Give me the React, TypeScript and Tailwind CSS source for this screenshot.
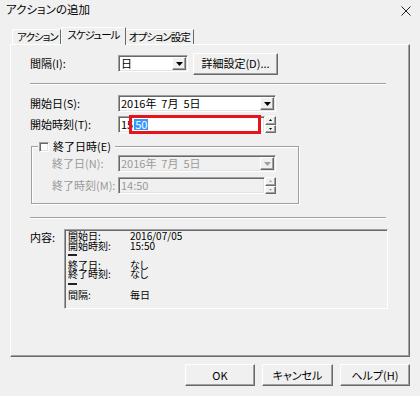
import React from "react";

const raised =
  "border border-t-white border-l-white border-r-[#696969] border-b-[#696969] shadow-[inset_-1px_-1px_0_#a0a0a0] bg-[#f0f0f0]";
const sunken =
  "border border-t-[#a0a0a0] border-l-[#a0a0a0] border-r-white border-b-white shadow-[inset_1px_1px_0_#696969,inset_-1px_-1px_0_#e3e3e3]";

function DownArrow({ disabled }: { disabled?: boolean }) {
  return (
    <svg width="7" height="4" viewBox="0 0 7 4">
      <path d="M0 0H7L3.5 4Z" fill={disabled ? "#a0a0a0" : "#000"} />
    </svg>
  );
}

function Combo({ w, value, disabled }: { w: string; value: string; disabled?: boolean }) {
  return (
    <div className={`flex h-[17px] ${w} ${sunken} p-[1px] ${disabled ? "bg-[#f0f0f0] text-[#9a9a9a]" : "bg-white text-black"}`}>
      <div className="flex-1 flex items-center pl-[1px] leading-none whitespace-pre">{value}</div>
      <div className={`w-[14px] h-full ${raised} flex items-center justify-center`}>
        <DownArrow disabled={disabled} />
      </div>
    </div>
  );
}

function Spin({ disabled }: { disabled?: boolean }) {
  const c = disabled ? "#a0a0a0" : "#000";
  return (
    <div className="flex flex-col w-[11px] h-[17px]">
      <div className={`flex-1 ${raised} flex items-center justify-center`}>
        <svg width="3" height="2" viewBox="0 0 3 2"><path d="M0 2H3L1.5 0Z" fill={c} /></svg>
      </div>
      <div className={`flex-1 ${raised} flex items-center justify-center`}>
        <svg width="3" height="2" viewBox="0 0 3 2"><path d="M0 0H3L1.5 2Z" fill={c} /></svg>
      </div>
    </div>
  );
}

function Separator() {
  return <div className="w-[356px] h-[2px] border-t border-t-[#a0a0a0] border-b border-b-white" />;
}

function Btn({ w, children }: { w: string; children: React.ReactNode }) {
  return (
    <div className={`${w} h-[22px] ${raised} flex items-center justify-center text-[11px] leading-none`}>
      {children}
    </div>
  );
}

export default function App() {
  return (
    <div className="w-[420px] h-[396px] bg-[#f0f0f0] flex flex-col text-black text-[11px] font-['Noto_Sans_CJK_JP',sans-serif] [font-feature-settings:'palt'] overflow-hidden">
      {/* title bar */}
      <div className="h-[22px] flex items-center justify-between pl-[6px] pr-[9px]">
        <span className="text-[11.5px] leading-none -mt-[2px]">アクションの追加</span>
        <svg width="10" height="10" viewBox="0 0 10 10" className="-mt-[1px]">
          <path d="M0.5 0.5L9.5 9.5M9.5 0.5L0.5 9.5" stroke="#222" strokeWidth="1" />
        </svg>
      </div>

      {/* tabs */}
      <div className="px-[10px] flex flex-col">
        <div className="h-[22px] flex items-end pl-[2px]">
          <div className="w-[49px] h-[15px] border-t border-l border-white border-r border-r-[#696969] flex items-center justify-center leading-none text-[10.5px] tracking-[-1px] pl-[2px] whitespace-nowrap">
            アクション
          </div>
          <div className="w-[65px] h-[18px] -mb-[1px] z-10 bg-[#f0f0f0] border-t border-l border-white border-r border-r-[#696969] flex items-start pt-[2px] justify-center leading-none text-[10.5px] tracking-[-1px] whitespace-nowrap">
            スケジュール
          </div>
          <div className="w-[68px] h-[15px] border-t border-white border-r border-r-[#696969] flex items-center justify-center leading-none text-[10.5px] tracking-[-0.8px] whitespace-nowrap">
            オプション設定
          </div>
        </div>

        {/* panel */}
        <div className="h-[313px] border border-t-white border-l-white border-r-[#696969] border-b-[#696969] shadow-[inset_-1px_-1px_0_#a0a0a0] pl-[19px] pt-[10px] flex flex-col">
          {/* row 1 */}
          <div className="flex items-center h-[17px]">
            <div className="w-[88px]">間隔(I):</div>
            <Combo w="w-[70px]" value="日" />
            <div className="ml-[5px]">
              <Btn w="w-[85px]">詳細設定(D)...</Btn>
            </div>
          </div>

          <div className="mt-[11px]"><Separator /></div>

          <div className="flex items-center h-[17px] mt-[10px]">
            <div className="w-[88px]">開始日(S):</div>
            <Combo w="w-[158px]" value="2016年  7月  5日" />
          </div>

          <div className="flex items-center h-[17px] mt-[4px]">
            <div className="w-[88px]">開始時刻(T):</div>
            <div className="relative flex">
              <div className={`w-[147px] h-[17px] ${sunken} bg-white flex items-center pl-[2px] leading-none`}>
                <span>15</span>
                <span className="bg-[#3399ff] text-white px-[1px] ml-[1px]">50</span>
              </div>
              <Spin />
              <div className="absolute left-[11px] -top-[1px] w-[132px] h-[19px] border-[3px] border-[#e8141c]" />
            </div>
          </div>

          {/* group box */}
          <div className="relative mt-[13px] ml-[1px] w-[268px] h-[58px] border border-[#a0a0a0] shadow-[inset_1px_1px_0_white,1px_1px_0_white] pl-[20px] pt-[8px] flex flex-col">
            <div className="absolute left-[6px] -top-[6px] flex items-center bg-[#f0f0f0] pr-[4px] pl-[1px]">
              <div className={`w-[10px] h-[10px] ${sunken} bg-white`} />
              <span className="ml-[4px] leading-none">終了日時(E)</span>
            </div>
            <div className="flex items-center h-[17px]">
              <div className="w-[66px] text-[#9a9a9a]">終了日(N):</div>
              <Combo w="w-[158px]" value="2016年  7月  5日" disabled />
            </div>
            <div className="flex items-center h-[17px] mt-[5px]">
              <div className="w-[66px] text-[#9a9a9a]">終了時刻(M):</div>
              <div className={`w-[147px] h-[17px] ${sunken} bg-[#f0f0f0] text-[#9a9a9a] flex items-center pl-[2px] leading-none`}>
                14:50
              </div>
              <Spin disabled />
            </div>
          </div>

          <div className="mt-[13px]"><Separator /></div>

          <div className="flex items-start mt-[10px]">
            <div className="w-[34px] pt-[1px] leading-[14px]">内容:</div>
            <div className="w-[324px] h-[80px] border border-t-[#a0a0a0] border-l-[#a0a0a0] border-r-white border-b-white shadow-[inset_1px_1px_0_#696969] pl-[3px] pt-[1px] text-[10px] leading-[9.6px]">
              <div className="flex h-[9.6px]"><span className="w-[62px]">開始日:</span><span>2016/07/05</span></div>
              <div className="flex h-[9.6px]"><span className="w-[62px]">開始時刻:</span><span>15:50</span></div>
              <div className="h-[9.6px] flex items-center"><div className="w-[9px] h-[1.5px] bg-[#222]" /></div>
              <div className="flex h-[9.6px]"><span className="w-[62px]">終了日:</span><span>なし</span></div>
              <div className="flex h-[9.6px]"><span className="w-[62px]">終了時刻:</span><span>なし</span></div>
              <div className="h-[9.6px] flex items-center"><div className="w-[9px] h-[1.5px] bg-[#222]" /></div>
              <div className="flex h-[9.6px] mt-[1px]"><span className="w-[62px]">間隔:</span><span>毎日</span></div>
            </div>
          </div>
        </div>

        {/* buttons */}
        <div className="flex justify-end mt-[7px] gap-[7px]">
          <Btn w="w-[70px]">OK</Btn>
          <Btn w="w-[71px]">キャンセル</Btn>
          <Btn w="w-[70px]">ヘルプ(H)</Btn>
        </div>
      </div>
    </div>
  );
}
